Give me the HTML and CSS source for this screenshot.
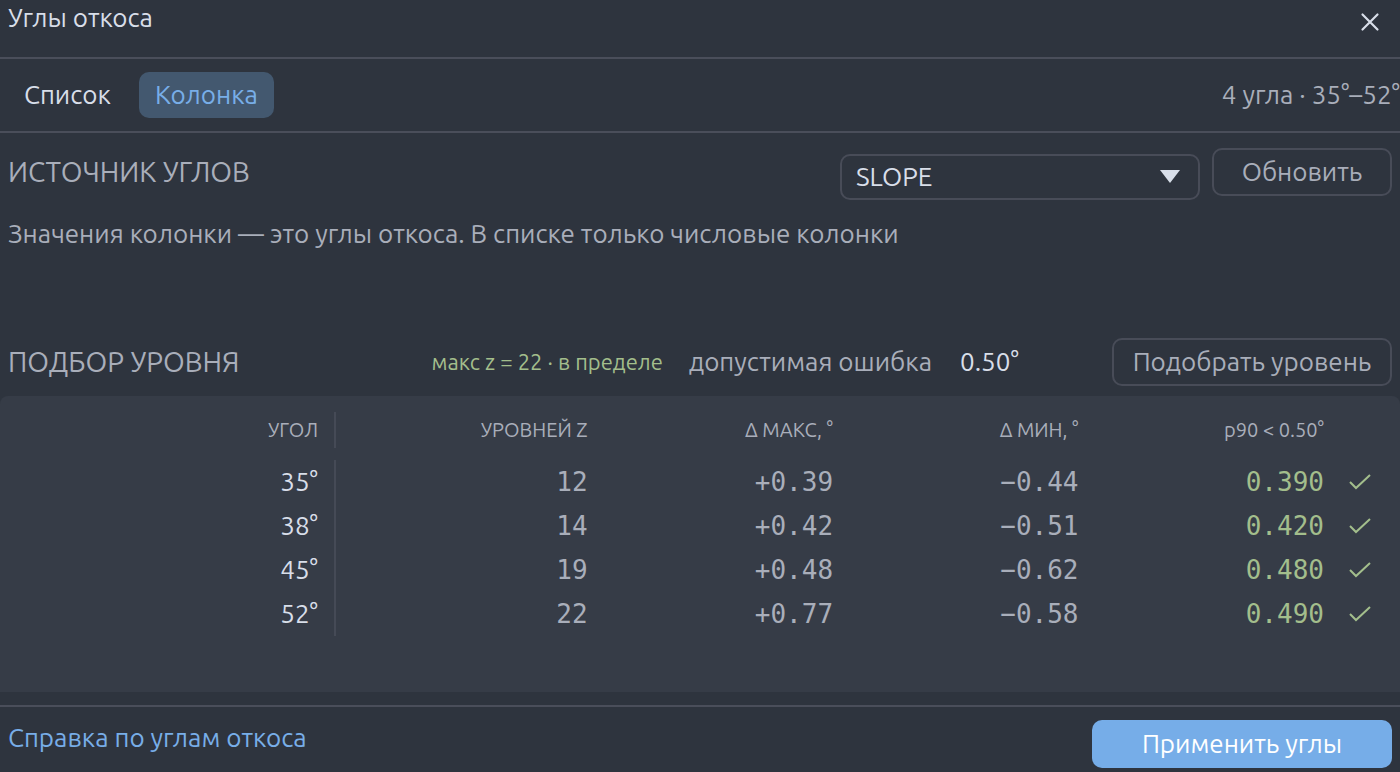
FILE: index.html
```html
<!DOCTYPE html>
<html lang="ru">
<head>
    <meta charset="UTF-8">
    <meta name="viewport" content="width=device-width, initial-scale=1.0">
    <title>Углы откоса</title>
    <link rel="stylesheet" href="styles.css">
</head>
<body>
    <div class="dialog">
        <header class="titlebar">
            <h1 class="title">Углы откоса</h1>
            <button class="close-btn" type="button" aria-label="Закрыть">
                <svg width="20" height="20" viewBox="0 0 20 20" aria-hidden="true">
                    <path d="M2.5 2.5L17.5 17.5M17.5 2.5L2.5 17.5" fill="none" stroke="currentColor" stroke-width="2.2" stroke-linecap="round"/>
                </svg>
            </button>
        </header>

        <!-- режимы -->
        <nav class="tabs">
            <button class="tab" type="button">Список</button>
            <button class="tab active" type="button">Колонка</button>
            <span class="summary">4 угла · 35°–52°</span>
        </nav>

        <!-- источник -->
        <section class="source">
            <div class="source-row">
                <h2 class="section-title"><label for="column">ИСТОЧНИК УГЛОВ</label></h2>
                <div class="select-wrap">
                    <select class="select" id="column">
                        <option>SLOPE</option>
                    </select>
                    <svg class="arrow" width="20" height="13" viewBox="0 0 20 13" aria-hidden="true">
                        <path d="M0 0H20L10 13Z" fill="currentColor"/>
                    </svg>
                </div>
                <button class="btn btn-refresh" type="button">Обновить</button>
            </div>
            <p class="hint">Значения колонки — это углы откоса. В списке только числовые колонки</p>
        </section>

        <!-- подбор -->
        <section class="fit">
            <div class="fit-row">
                <h2 class="section-title">ПОДБОР УРОВНЯ</h2>
                <span class="limit">макс z = 22 · в пределе</span>
                <label class="tolerance-label" for="tolerance">допустимая ошибка</label>
                <input class="tolerance" id="tolerance" type="text" value="0.50°">
                <button class="btn btn-fit" type="button">Подобрать уровень</button>
            </div>
            <div class="panel">
                <table class="levels">
                    <thead>
                        <tr>
                            <th class="angle">УГОЛ</th>
                            <th>УРОВНЕЙ Z</th>
                            <th class="value">Δ МАКС, °</th>
                            <th class="value">Δ МИН, °</th>
                            <th class="value">p90 &lt; 0.50°</th>
                            <th class="status"></th>
                        </tr>
                    </thead>
                    <tbody>
                        <tr>
                            <td class="angle">35°</td>
                            <td>12</td>
                            <td>+0.39</td>
                            <td>−0.44</td>
                            <td class="ok">0.390</td>
                            <td class="status"><svg class="check" width="24" height="18" viewBox="0 0 24 18"><path d="M2 9L8 15L22 2"/></svg></td>
                        </tr>
                        <tr>
                            <td class="angle">38°</td>
                            <td>14</td>
                            <td>+0.42</td>
                            <td>−0.51</td>
                            <td class="ok">0.420</td>
                            <td class="status"><svg class="check" width="24" height="18" viewBox="0 0 24 18"><path d="M2 9L8 15L22 2"/></svg></td>
                        </tr>
                        <tr>
                            <td class="angle">45°</td>
                            <td>19</td>
                            <td>+0.48</td>
                            <td>−0.62</td>
                            <td class="ok">0.480</td>
                            <td class="status"><svg class="check" width="24" height="18" viewBox="0 0 24 18"><path d="M2 9L8 15L22 2"/></svg></td>
                        </tr>
                        <tr>
                            <td class="angle">52°</td>
                            <td>22</td>
                            <td>+0.77</td>
                            <td>−0.58</td>
                            <td class="ok">0.490</td>
                            <td class="status"><svg class="check" width="24" height="18" viewBox="0 0 24 18"><path d="M2 9L8 15L22 2"/></svg></td>
                        </tr>
                    </tbody>
                </table>
            </div>
        </section>

        <footer class="footer">
            <a class="help" href="#help">Справка по углам откоса</a>
            <button class="btn-apply" type="button">Применить углы</button>
        </footer>
    </div>
</body>
</html>
```
FILE: styles.css
```css
* {
    margin: 0;
    padding: 0;
    box-sizing: border-box;
}

body {
    background: #2e343e;
    color: #d8dee9;
    font-family: Ubuntu, "Noto Sans", sans-serif;
    font-size: 26px;
    line-height: 32px;
}

button,
select,
input {
    font: inherit;
    color: inherit;
    background: none;
    border: none;
}

button {
    cursor: pointer;
}

.dialog {
    min-height: 100vh;
    display: flex;
    flex-direction: column;
}

/* Заголовок */
.titlebar {
    display: flex;
    justify-content: space-between;
    align-items: flex-start;
    height: 59px;
    padding: 2px 20px 0 8px;
    border-bottom: 2px solid #4a4e5a;
}

.title {
    font-size: 26px;
    font-weight: 400;
}

.close-btn {
    display: flex;
    padding: 10px 0;
}

/* Вкладки */
.tabs {
    display: flex;
    align-items: center;
    gap: 12px;
    height: 74px;
    padding-left: 8px;
    border-bottom: 2px solid #4a4e5a;
}

.tab {
    height: 46px;
    padding: 0 16px;
    border-radius: 10px;
}

.tab.active {
    background: #43586f;
    color: #78aee8;
}

.summary {
    margin-left: auto;
    color: #a9aeba;
}

/* Источник углов */
.source {
    padding: 15px 8px 0;
    color: #a9aeba;
}

.source-row {
    display: flex;
    align-items: flex-start;
    gap: 12px;
}

.section-title {
    flex: 1;
    font-size: 28px;
    line-height: 48px;
    font-weight: 400;
    color: #a9aeba;
}

.select-wrap {
    position: relative;
    width: 360px;
    margin-top: 6px;
}

.select {
    display: block;
    width: 100%;
    height: 46px;
    padding: 0 14px;
    border: 2px solid #484c58;
    border-radius: 10px;
    color: #d8dee9;
    appearance: none;
}

.arrow {
    position: absolute;
    top: 16px;
    right: 20px;
    color: #d8dee9;
    pointer-events: none;
}

.btn {
    height: 48px;
    border: 2px solid #484c58;
    border-radius: 10px;
    color: #a9aeba;
}

.btn-refresh {
    width: 180px;
}

.hint {
    margin-top: 18px;
}

/* Подбор уровня */
.fit {
    margin-top: 88px;
}

.fit-row {
    display: flex;
    align-items: center;
    padding: 0 8px;
}

.limit {
    margin-right: 26px;
    font-size: 22px;
    color: #a3be8c;
}

.tolerance-label {
    margin-right: 28px;
    color: #a9aeba;
}

.tolerance {
    width: 152px;
}

.btn-fit {
    width: 280px;
}

.panel {
    height: 296px;
    margin-top: 10px;
    padding-top: 16px;
    border-radius: 8px 8px 0 0;
    background: #363c47;
}

.levels {
    width: 100%;
    table-layout: fixed;
    border-spacing: 4px 0;
    color: #a9aeba;
    text-align: right;
}

.levels th {
    height: 36px;
    font-size: 20px;
    font-weight: 400;
    text-align: right;
}

.levels td {
    height: 44px;
    font-family: "DejaVu Sans Mono", monospace;
    font-size: 26px;
}

.levels tbody::before {
    content: "";
    display: block;
    height: 12px;
}

.levels .value {
    width: 17.6%;
}

.levels .angle {
    width: 24.2%;
    padding-right: 16px;
    border-right: 2px solid #454a56;
}

.levels td.angle {
    font-family: inherit;
    color: #d8dee9;
}

.levels .ok {
    color: #a3be8c;
}

.levels .status {
    width: 68px;
    padding-left: 20px;
    text-align: left;
}

.check {
    display: block;
    fill: none;
    stroke: #a3be8c;
    stroke-width: 2;
}

/* Низ окна */
.footer {
    display: flex;
    justify-content: space-between;
    align-items: flex-start;
    margin-top: 13px;
    padding: 13px 8px 4px;
    border-top: 2px solid #4a4e5a;
}

.help {
    margin-top: 2px;
    color: #78aee8;
    text-decoration: none;
}

.btn-apply {
    width: 300px;
    height: 48px;
    border-radius: 10px;
    background: #76ade8;
    color: #fff;
}
```
